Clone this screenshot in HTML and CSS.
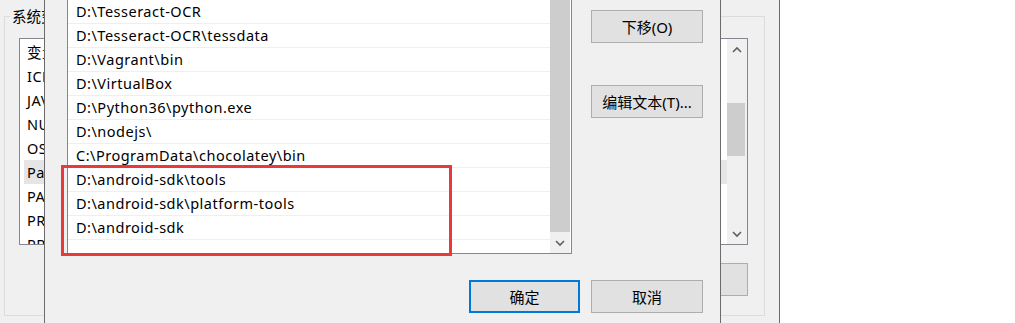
FILE: index.html
```html
<!DOCTYPE html>
<html lang="zh-CN">
<head>
<meta charset="utf-8">
<title>环境变量</title>
<link rel="stylesheet" href="styles.css">
</head>
<body>
<div class="desktop">
  <section class="win back-win">
    <fieldset class="group">
      <legend>系统变量(S)</legend>
      <div class="group-body">
        <div class="listbox var-list">
          <div class="var-rows">
            <div class="var-row head"><span class="c1">变量</span><span>值</span></div>
            <div class="var-row"><span class="c1">ICE_HOME</span><span></span></div>
            <div class="var-row"><span class="c1">JAVA_HOME</span><span></span></div>
            <div class="var-row"><span class="c1">NUMBER_OF_PROCESSORS</span><span></span></div>
            <div class="var-row"><span class="c1">OS</span><span>Windows_NT</span></div>
            <div class="var-row sel"><span class="c1">Path</span><span></span></div>
            <div class="var-row"><span class="c1">PATHEXT</span><span></span></div>
            <div class="var-row"><span class="c1">PROCESSOR_ARCHITECTURE</span><span></span></div>
            <div class="var-row"><span class="c1">PROCESSOR_IDENTIFIER</span><span></span></div>
          </div>
          <div class="vscroll back-scroll">
            <div class="arrow"><svg width="10" height="8" viewBox="0 0 10 8"><polyline points="1,6 5,2 9,6" fill="none" stroke="#606060" stroke-width="1.6"/></svg></div>
            <div class="track"><div class="thumb"></div></div>
            <div class="arrow"><svg width="10" height="8" viewBox="0 0 10 8"><polyline points="1,2 5,6 9,2" fill="none" stroke="#606060" stroke-width="1.6"/></svg></div>
          </div>
        </div>
        <div class="btnrow">
          <button class="btn">新建(W)...</button>
          <button class="btn">编辑(I)...</button>
          <button class="btn">删除(L)</button>
        </div>
      </div>
    </fieldset>
  </section>

  <section class="win front-win">
    <div class="main">
      <div class="listbox path-list">
        <ul class="entries">
          <li>D:\Tesseract-OCR</li>
          <li>D:\Tesseract-OCR\tessdata</li>
          <li>D:\Vagrant\bin</li>
          <li>D:\VirtualBox</li>
          <li>D:\Python36\python.exe</li>
          <li>D:\nodejs\</li>
          <li>C:\ProgramData\chocolatey\bin</li>
          <li>D:\android-sdk\tools</li>
          <li>D:\android-sdk\platform-tools</li>
          <li>D:\android-sdk</li>
        </ul>
        <div class="vscroll front-scroll">
          <div class="track"><div class="thumb"></div></div>
          <div class="arrow"><svg width="10" height="8" viewBox="0 0 10 8"><polyline points="1,2 5,6 9,2" fill="none" stroke="#606060" stroke-width="1.6"/></svg></div>
        </div>
      </div>
      <div class="side">
        <button class="btn">下移(O)</button>
        <button class="btn">编辑文本(T)...</button>
      </div>
    </div>
    <div class="footer">
      <button class="btn primary">确定</button>
      <button class="btn">取消</button>
    </div>
  </section>

  <div class="highlight"></div>
</div>
</body>
</html>
```
FILE: styles.css
```css
html, body {
  margin: 0;
  padding: 0;
}
body {
  width: 1015px;
  height: 323px;
  overflow: hidden;
  background: #ffffff;
  font-family: "Noto Sans", "Noto Sans CJK SC", sans-serif;
  font-size: 14px;
  color: #000000;
}
.desktop {
  position: relative;
  width: 1015px;
  height: 323px;
  overflow: hidden;
}
.win {
  position: absolute;
  box-sizing: border-box;
  background: #f0f0f0;
  border: 1px solid #6b6b6b;
}

/* ---------- back window ---------- */
.back-win {
  left: -1px;
  top: -1px;
  width: 781px;
  height: 340px;
}
.group {
  margin: 6px 0 0 4px;
  padding: 0 0 19px 0;
  width: 761px;
  box-sizing: border-box;
  border: 1px solid #dcdcdc;
  min-width: 0;
}
.group legend {
  margin-left: 5px;
  padding: 0 2px;
  line-height: 20px;
  font-size: 14.5px;
}
.group-body {
  margin: 12px 0 0 14px;
  width: 729px;
  display: flex;
  flex-direction: column;
  gap: 18px;
}
.listbox {
  box-sizing: border-box;
  background: #ffffff;
  border: 1px solid #828790;
  display: flex;
  overflow: hidden;
}
.var-list {
  height: 207px;
}
.var-rows {
  flex: 1;
  padding: 1px 0 0 4px;
  overflow: hidden;
}
.var-row {
  display: flex;
  height: 24px;
  line-height: 24px;
  padding-left: 3px;
  white-space: nowrap;
  font-size: 14.5px;
  letter-spacing: 0.5px;
}
.var-row .c1 {
  width: 260px;
}
.var-row.sel {
  background: #e5e5e5;
}
.vscroll {
  display: flex;
  flex-direction: column;
  background: #f0f0f0;
}
.back-scroll {
  width: 20px;
}
.arrow {
  height: 21px;
  display: flex;
  align-items: center;
  justify-content: center;
  padding-right: 1px;
}
.track {
  flex: 1;
}
.back-scroll .thumb {
  margin: 43px 2px 0 0;
  height: 53px;
  background: #cdcdcd;
}
.btnrow {
  display: flex;
  justify-content: flex-end;
  gap: 10px;
}
.btn {
  box-sizing: border-box;
  height: 33px;
  width: 112px;
  padding: 0;
  margin: 0;
  background: #e1e1e1;
  border: 1px solid #adadad;
  font-family: "Noto Sans", "Noto Sans CJK SC", sans-serif;
  font-size: 15px;
  color: #000000;
}

/* ---------- front window ---------- */
.front-win {
  left: 44px;
  top: -2px;
  width: 677px;
  height: 345px;
  display: flex;
  flex-direction: column;
  padding: 0 17px 0 22px;
}
.main {
  display: flex;
  gap: 19px;
}
.path-list {
  width: 505px;
  height: 255px;
}
.entries {
  list-style: none;
  margin: 0;
  padding: 0;
  flex: 1;
}
.entries li {
  height: 24px;
  box-sizing: border-box;
  line-height: 23px;
  padding-left: 8px;
  border-bottom: 1px solid #efefef;
  white-space: nowrap;
  font-size: 14.5px;
  letter-spacing: 0.5px;
}
.front-scroll {
  width: 21px;
  background: #ffffff;
}
.front-scroll .track {
  background: #cdcdcd;
  margin-right: 1px;
}
.front-scroll .arrow {
  background: #f0f0f0;
  margin-right: 1px;
  padding-right: 0;
}
.side {
  display: flex;
  flex-direction: column;
  gap: 42px;
  padding-top: 11px;
}
.footer {
  display: flex;
  justify-content: flex-end;
  gap: 11px;
  padding-top: 26px;
}
.footer .btn.primary {
  width: 111px;
  border: 2px solid #0078d7;
}

/* ---------- annotation ---------- */
.highlight {
  position: absolute;
  left: 61px;
  top: 165px;
  width: 391px;
  height: 91px;
  box-sizing: border-box;
  border: 3px solid #e8393d;
}
```
